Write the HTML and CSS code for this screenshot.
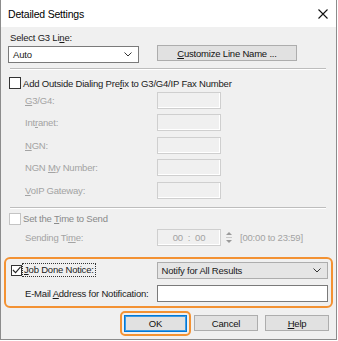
FILE: index.html
```html
<!DOCTYPE html>
<html lang="en">
<head>
    <meta charset="UTF-8">
    <meta name="viewport" content="width=device-width, initial-scale=1.0">
    <title>Detailed Settings</title>
    <link rel="stylesheet" href="styles.css">
</head>
<body>
    <div class="dialog">
        <div class="titlebar">
            <span class="title">Detailed Settings</span>
            <svg class="close" width="10" height="10" viewBox="0 0 10 10">
                <path d="M0.5 0.5 L9.5 9.5 M9.5 0.5 L0.5 9.5" stroke="#111" stroke-width="1.1" fill="none"/>
            </svg>
        </div>

        <div class="content">
            <div class="top-label">Select G3 Li<u>n</u>e:</div>
            <div class="line-row">
                <div class="combo combo-auto">
                    <span>Auto</span>
                    <svg class="chevron" width="8" height="5" viewBox="0 0 8 5"><path d="M0.5 0.5 L4 4 L7.5 0.5" stroke="#333" fill="none"/></svg>
                </div>
                <div class="btn btn-wide"><u>C</u>ustomize Line Name ...</div>
            </div>

            <div class="sep sep-first"></div>

            <div class="check-row">
                <span class="check"></span>
                <span>Add Outside Dialing Pre<u>f</u>ix to G3/G4/IP Fax Number</span>
            </div>

            <div class="field disabled">
                <span class="field-label"><u>G</u>3/G4:</span>
                <span class="box"></span>
            </div>
            <div class="field disabled">
                <span class="field-label">Int<u>r</u>anet:</span>
                <span class="box"></span>
            </div>
            <div class="field disabled">
                <span class="field-label"><u>N</u>GN:</span>
                <span class="box"></span>
            </div>
            <div class="field disabled">
                <span class="field-label">NGN <u>M</u>y Number:</span>
                <span class="box"></span>
            </div>
            <div class="field disabled">
                <span class="field-label"><u>V</u>oIP Gateway:</span>
                <span class="box"></span>
            </div>

            <div class="sep sep-second"></div>

            <div class="check-row check-row-off">
                <span class="check check-off"></span>
                <span>Set the <u>T</u>ime to Send</span>
            </div>

            <div class="field time-row disabled">
                <span class="field-label">Sending Ti<u>m</u>e:</span>
                <span class="box time-box">00&nbsp;&nbsp;:&nbsp;&nbsp;00</span>
                <svg class="spin" width="8" height="17" viewBox="0 0 8 17">
                    <path d="M1 6 L4 3 L7 6 Z" fill="#9a9a9a"/>
                    <path d="M1 8.5 H7" stroke="#c8c8c8"/>
                    <path d="M1 11 L4 14 L7 11 Z" fill="#9a9a9a"/>
                </svg>
                <span class="range">[00:00 to 23:59]</span>
            </div>

            <div class="notice">
                <div class="notice-row">
                    <div class="notice-check">
                        <span class="check check-on">
                            <svg width="10" height="10" viewBox="0 0 10 10"><path d="M1 5 L4 8 L9.5 1.5" stroke="#222" stroke-width="1.2" fill="none"/></svg>
                        </span>
                        <span class="focus"><u>J</u>ob Done Notice:</span>
                    </div>
                    <div class="combo combo-notify">
                        <span>Notify for All Results</span>
                        <svg class="chevron" width="8" height="5" viewBox="0 0 8 5"><path d="M0.5 0.5 L4 4 L7.5 0.5" stroke="#333" fill="none"/></svg>
                    </div>
                </div>
                <div class="notice-row email-row">
                    <span class="field-label">E-Mail <u>A</u>ddress for Notification:</span>
                    <span class="email-input"></span>
                </div>
            </div>

            <div class="buttons">
                <div class="ok-ring"><div class="btn btn-ok">OK</div></div>
                <div class="btn btn-cancel">Cancel</div>
                <div class="btn btn-help"><u>H</u>elp</div>
            </div>
        </div>
    </div>
</body>
</html>
```

FILE: styles.css
```css
body {
    margin: 0;
    background: #ffffff;
    font-family: "Liberation Sans", Arial, sans-serif;
    font-size: 9.5px;
    letter-spacing: -0.2px;
    color: #1a1a1a;
}

u {
    text-decoration-thickness: 1px;
    text-underline-offset: 1px;
}

.dialog {
    width: 337px;
    height: 340px;
    box-sizing: border-box;
    border: 1px solid #8c8c8c;
    border-top: none;
    background: #f0f0f0;
}

.titlebar {
    height: 27px;
    background: #ffffff;
    display: flex;
    align-items: center;
    justify-content: space-between;
    padding: 0 8px 0 7px;
}

.title {
    font-size: 10.5px;
    color: #000;
}

.close {
    margin-top: 1px;
}

.content {
    padding: 0 7px;
}

.top-label {
    margin-top: 5px;
    height: 12px;
    line-height: 12px;
    padding-left: 2px;
}

.line-row {
    margin-top: 1px;
    height: 17px;
    display: flex;
    gap: 18px;
}

.combo {
    height: 17px;
    box-sizing: border-box;
    display: flex;
    align-items: center;
    justify-content: space-between;
    padding: 0 4px 0 4px;
}

.combo-auto {
    width: 131px;
    margin-top: 1px;
    background: #ffffff;
    border: 1px solid #7a7a7a;
}

.combo-notify {
    width: 172px;
    background: #e5e5e5;
    border: 1px solid #adadad;
}

.chevron {
    margin-right: 2px;
}

.btn {
    height: 16px;
    box-sizing: border-box;
    background: #e1e1e1;
    border: 1px solid #adadad;
    display: flex;
    align-items: center;
    justify-content: center;
    color: #111;
}

.btn-wide {
    width: 140px;
}

.sep {
    height: 1px;
    background: #bdbdbd;
    border-bottom: 1px solid #ffffff;
    margin-left: 2px;
    margin-right: 3px;
}

.sep-first {
    margin-top: 6px;
}

.sep-second {
    margin-top: 5px;
}

.check-row {
    margin-top: 7px;
    height: 12px;
    display: flex;
    align-items: center;
    gap: 2px;
    padding-left: 1px;
}

.check-row-off {
    margin-top: 4px;
    color: #8a8a8a;
}

.check {
    width: 12px;
    height: 12px;
    box-sizing: border-box;
    border: 1px solid #333;
    background: #fff;
    display: flex;
    align-items: center;
    justify-content: center;
}

.check-off {
    border-color: #c4c4c4;
}

.field {
    height: 22.5px;
    display: flex;
    align-items: center;
    padding-left: 17px;
}

.field-label {
    width: 132px;
    flex-shrink: 0;
}

.disabled .field-label {
    color: #a3a3a3;
}

.box {
    width: 64px;
    height: 17px;
    box-sizing: border-box;
    border: 1px solid #cfcfcf;
    box-shadow: inset -1px -1px 0 #ffffff;
}

.time-row {
    height: 22px;
    margin-top: 2px;
}

.time-box {
    display: flex;
    align-items: center;
    justify-content: center;
    color: #a3a3a3;
}

.spin {
    margin-left: 4px;
}

.range {
    margin-left: 7px;
    color: #a3a3a3;
}

.notice {
    margin: 8px -4px 0 -4px;
    height: 51px;
    box-sizing: border-box;
    border: 2px solid #f39233;
    border-radius: 6px;
    padding: 0 3px 0 5px;
}

.notice-row {
    height: 23px;
    display: flex;
    align-items: center;
}

.notice-check {
    width: 146px;
    display: flex;
    align-items: center;
}

.check-on {
    width: 11px;
    height: 11px;
    border-color: #333;
}

.focus {
    margin-left: 0;
    padding: 0 1px;
    line-height: 12px;
    border: 1px dotted #333;
}

.email-row {
    padding-left: 14px;
}

.email-input {
    flex: 1;
    height: 17px;
    box-sizing: border-box;
    background: #ffffff;
    border: 1px solid #7a7a7a;
}

.buttons {
    margin-top: 3px;
    display: flex;
    align-items: center;
    justify-content: flex-end;
}

.ok-ring {
    border: 2px solid #f39233;
    border-radius: 5px;
    padding: 2px;
    margin-right: 3px;
}

.btn-ok {
    width: 63px;
    height: 17px;
    border: 1px solid #0078d7;
    box-shadow: inset 0 0 0 1px #3f9be3;
}

.btn-cancel {
    width: 64px;
    margin-right: 7px;
}

.btn-help {
    width: 64px;
}
```
